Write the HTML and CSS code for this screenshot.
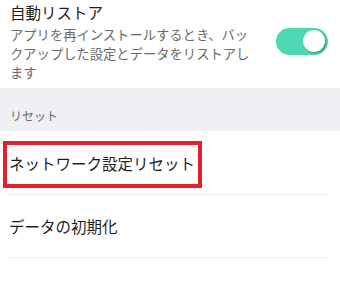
FILE: index.html
```html
<!DOCTYPE html>
<html lang="ja">
<head>
<meta charset="utf-8">
<link rel="stylesheet" href="styles.css">
</head>
<body>
<div class="page">
  <div class="setting">
    <div class="setting-text">
      <div class="setting-title">自動リストア</div>
      <div class="setting-desc">アプリを再インストールするとき、バックアップした設定とデータをリストアします</div>
    </div>
    <div class="toggle"><div class="knob"></div></div>
  </div>
  <div class="section-header">リセット</div>
  <div class="row row-highlight">
    <span class="row-label">ネットワーク設定リセット</span>
    <div class="highlight-box"></div>
  </div>
  <div class="row">
    <span class="row-label">データの初期化</span>
  </div>
</div>
</body>
</html>
```
FILE: styles.css
```css
html, body {
  margin: 0;
  padding: 0;
  background: #ffffff;
}
.page {
  width: 340px;
  font-family: "Noto Sans CJK JP", "Noto Sans", sans-serif;
  color: #1e1e1e;
}
.setting {
  display: flex;
  align-items: flex-start;
  height: 88px;
  padding-left: 10px;
  box-sizing: border-box;
}
.setting-text {
  width: 246px;
  flex: none;
}
.setting-title {
  font-size: 15.5px;
  line-height: 22px;
  margin-top: 1px;
}
.setting-desc {
  font-size: 13.3px;
  line-height: 19px;
  color: #6b6b6b;
  margin-top: 2px;
  line-break: normal;
}
.toggle {
  margin-left: 20px;
  margin-top: 28px;
  width: 52px;
  height: 27px;
  border-radius: 14px;
  background: #4dd8b2;
  position: relative;
  flex: none;
}
.knob {
  position: absolute;
  right: 3px;
  top: 2px;
  width: 22px;
  height: 22px;
  border-radius: 50%;
  background: #ffffff;
  box-shadow: 1px 1px 2px rgba(0, 0, 0, 0.35);
}
.section-header {
  background: #efeff4;
  height: 43px;
  box-sizing: border-box;
  padding: 19px 0 0 10px;
  font-size: 12px;
  line-height: 17px;
  color: #6b6b6b;
}
.row {
  position: relative;
  height: 63px;
  margin: 0 12px 0 8px;
  border-bottom: 1px solid #ececec;
  display: flex;
  align-items: center;
  padding-left: 1px;
  box-sizing: border-box;
}
.row-highlight {
  height: 64px;
}
.row-label {
  font-size: 15.5px;
  line-height: 22px;
}
.highlight-box {
  position: absolute;
  left: -5px;
  top: 10px;
  width: 199px;
  height: 47px;
  border: 4px solid #e3202c;
  box-sizing: border-box;
}
```
